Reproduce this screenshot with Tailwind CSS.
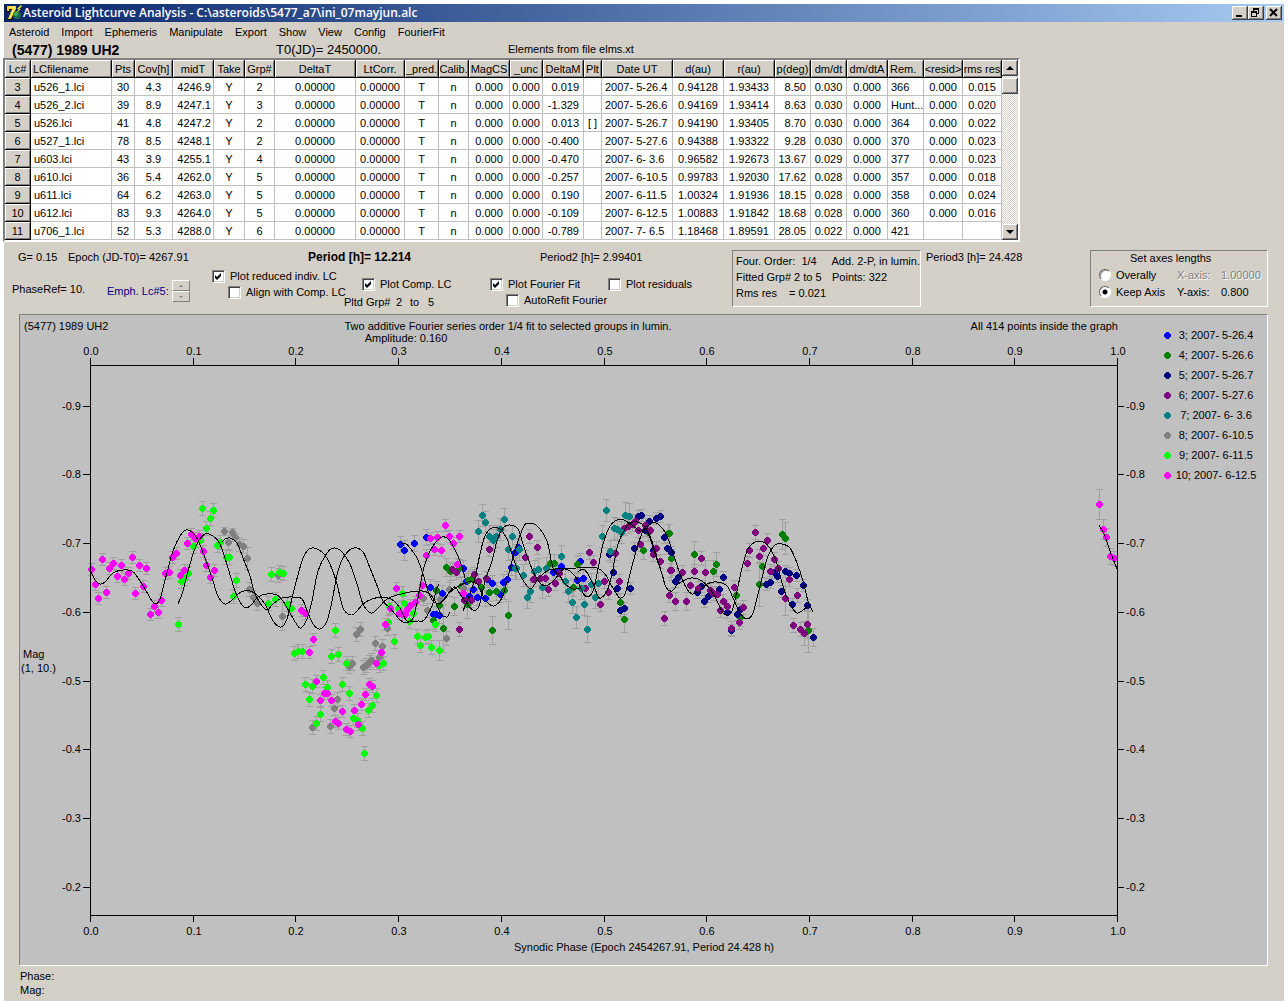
<!DOCTYPE html>
<html lang="en">
<head>
  <meta charset="UTF-8" />
  <meta name="viewport" content="width=device-width, initial-scale=1.0"/>
  <title>Asteroid Lightcurve Analysis</title>
  <script src="https://cdn.jsdelivr.net/npm/@tailwindcss/browser@4"></script>
</head>
<body class="bg-white pt-1 px-1 text-black text-[11px] leading-[14px] font-['Liberation_Sans',Arial,sans-serif] cursor-default">
  <div class="bg-[#d4d0c8]">

    <header class="flex items-center h-[18px] pl-0.5 pr-0.5 bg-linear-to-r from-[#0a246a] to-[#a6caf0]">
      <svg class="w-4 h-4 shrink-0" viewBox="0 0 16 16">
        <path d="M0 2h10v3L6 15H2L6 5H3v2H0z" fill="#000"/>
        <path d="M1 1h9v3L5 14H2L6 4H3v2H1z" fill="#f0d020"/>
        <path d="M3 2h6L4 13" fill="none" stroke="#fff79a" stroke-width="1"/>
        <circle cx="11" cy="10" r="4" fill="#206a50"/>
        <circle cx="10" cy="9" r="2" fill="#40b060"/>
        <path d="M15 0l-4 4h2l-3 4 5-4h-2l3-3z" fill="#ffff00"/>
      </svg>
      <h1 class="ml-px flex-1 text-white font-semibold text-[12px] leading-4 whitespace-nowrap font-['Open_Sans','Noto_Sans',sans-serif]">Asteroid Lightcurve Analysis - C:\asteroids\5477_a7\ini_07mayjun.alc</h1>
      <div class="flex">
        <button aria-label="Minimize" class="w-4 h-[14px] bg-[#d4d0c8] shadow-[inset_-1px_-1px_0_#404040,inset_1px_1px_0_#fff,inset_-2px_-2px_0_#808080]"><svg class="w-4 h-[14px]" viewBox="0 0 16 14"><path d="M4 9h6v2H4z"/></svg></button>
        <button aria-label="Restore" class="w-4 h-[14px] bg-[#d4d0c8] shadow-[inset_-1px_-1px_0_#404040,inset_1px_1px_0_#fff,inset_-2px_-2px_0_#808080]"><svg class="w-4 h-[14px]" viewBox="0 0 16 14"><path fill-rule="evenodd" d="M5 2h6v6H9v3H3V5h2zM6 4v1h3v2h1V4zM4 7v3h4V7z"/></svg></button>
        <button aria-label="Close" class="ml-0.5 w-4 h-[14px] bg-[#d4d0c8] shadow-[inset_-1px_-1px_0_#404040,inset_1px_1px_0_#fff,inset_-2px_-2px_0_#808080]"><svg class="w-4 h-[14px]" viewBox="0 0 16 14"><path d="M4 3l7 7M11 3l-7 7" stroke="#000" stroke-width="2"/></svg></button>
      </div>
    </header>

    <nav class="flex items-center gap-3 h-5 pl-[5px]">
      <button>Asteroid</button>
      <button>Import</button>
      <button>Ephemeris</button>
      <button>Manipulate</button>
      <button>Export</button>
      <button>Show</button>
      <button>View</button>
      <button>Config</button>
      <button>FourierFit</button>
    </nav>

    <div class="flex h-4 pl-2 whitespace-nowrap">
      <h2 class="w-[264px] font-bold text-[14px] leading-4">(5477) 1989 UH2</h2>
      <p class="w-[232px] text-[13px] leading-4">T0(JD)= 2450000.</p>
      <p>Elements from file elms.xt</p>
    </div>

    <!-- observation list -->
    <div class="flex w-fit border-2 border-t-[#808080] border-l-[#808080] border-r-white border-b-white -ml-px bg-white">
      <table class="table-fixed w-[997px] border-separate border-spacing-0 whitespace-nowrap">
        <colgroup>
          <col class="w-[26px]"><col class="w-[81px]"><col class="w-[23px]"><col class="w-[38px]"><col class="w-[41px]"><col class="w-[31px]"><col class="w-[30px]"><col class="w-[81px]"><col class="w-[49px]"><col class="w-[34px]"><col class="w-[30px]"><col class="w-[41px]"><col class="w-[33px]"><col class="w-[41px]"><col class="w-[18px]"><col class="w-[71px]"><col class="w-[51px]"><col class="w-[51px]"><col class="w-[36px]"><col class="w-[36px]"><col class="w-[41px]"><col class="w-[36px]"><col class="w-[39px]"><col class="w-[39px]">
        </colgroup>
        <thead><tr id="head"></tr></thead>
        <tbody id="rows"></tbody>
      </table>
      <div class="flex flex-col w-4 bg-[repeating-conic-gradient(#fff_0_25%,#d4d0c8_0_50%)] bg-[length:2px_2px]">
        <button aria-label="Scroll up" class="h-4 bg-[#d4d0c8] shadow-[inset_-1px_-1px_0_#404040,inset_1px_1px_0_#fff,inset_-2px_-2px_0_#808080]"><svg class="w-4 h-4" viewBox="0 0 16 16"><path d="M4 10l4-4 4 4z"/></svg></button>
        <div class="mt-0.5 h-4 bg-[#d4d0c8] shadow-[inset_-1px_-1px_0_#404040,inset_1px_1px_0_#fff,inset_-2px_-2px_0_#808080]"></div>
        <button aria-label="Scroll down" class="mt-auto h-4 bg-[#d4d0c8] shadow-[inset_-1px_-1px_0_#404040,inset_1px_1px_0_#fff,inset_-2px_-2px_0_#808080]"><svg class="w-4 h-4" viewBox="0 0 16 16"><path d="M4 6h8l-4 4z"/></svg></button>
      </div>
    </div>

    <!-- fit parameters and plot options -->
    <section class="flex pt-2 pl-2 pr-4 whitespace-nowrap">
      <div class="w-[200px]">
        <div class="flex pl-1.5"><p class="w-[50px]">G= 0.15</p><p>Epoch (JD-T0)= 4267.91</p></div>
        <div class="flex items-center mt-3">
          <p class="w-[95px]">PhaseRef= 10.</p>
          <p class="w-[65px] mt-1 text-[#000080]">Emph. Lc#5:</p>
          <div class="mt-1 flex flex-col">
            <button aria-label="Up" class="w-[18px] h-[11px] border border-t-white border-l-white border-r-[#808080] border-b-[#808080]"><svg class="block w-4 h-2" viewBox="0 0 16 8"><path d="M6 5l2-2 2 2z" fill="#808080"/></svg></button>
            <button aria-label="Down" class="w-[18px] h-[11px] border border-t-white border-l-white border-r-[#808080] border-b-[#808080]"><svg class="block w-4 h-2" viewBox="0 0 16 8"><path d="M6 3h4l-2 2z" fill="#808080"/></svg></button>
          </div>
        </div>
      </div>

      <div class="w-[520px]">
        <div class="flex pl-24"><p class="w-[232px] text-[12px] leading-[14px] font-bold">Period [h]= 12.214</p><p>Period2 [h]= 2.99401</p></div>
        <div class="flex">
          <div class="w-[132px] pt-[5px] flex flex-col gap-0.5">
            <label class="flex items-center gap-[5px]"><span class="relative w-[13px] h-[13px]"><input type="checkbox" checked class="peer block appearance-none w-[13px] h-[13px] bg-white border border-t-[#808080] border-l-[#808080] border-r-white border-b-white shadow-[inset_1px_1px_0_#404040,inset_-1px_-1px_0_#d4d0c8]"><svg class="hidden peer-checked:block absolute inset-0 w-[13px] h-[13px] pointer-events-none" viewBox="0 0 13 13"><path d="M3 5l2 2 4-4v3L5 10 3 8z"/></svg></span>Plot reduced indiv. LC</label>
            <label class="flex items-center gap-[5px] ml-4"><span class="relative w-[13px] h-[13px]"><input type="checkbox" class="peer block appearance-none w-[13px] h-[13px] bg-white border border-t-[#808080] border-l-[#808080] border-r-white border-b-white shadow-[inset_1px_1px_0_#404040,inset_-1px_-1px_0_#d4d0c8]"><svg class="hidden peer-checked:block absolute inset-0 w-[13px] h-[13px] pointer-events-none" viewBox="0 0 13 13"><path d="M3 5l2 2 4-4v3L5 10 3 8z"/></svg></span>Align with Comp. LC</label>
          </div>
          <div class="w-[146px] pt-[13px]">
            <label class="flex items-center gap-[5px] ml-[18px]"><span class="relative w-[13px] h-[13px]"><input type="checkbox" checked class="peer block appearance-none w-[13px] h-[13px] bg-white border border-t-[#808080] border-l-[#808080] border-r-white border-b-white shadow-[inset_1px_1px_0_#404040,inset_-1px_-1px_0_#d4d0c8]"><svg class="hidden peer-checked:block absolute inset-0 w-[13px] h-[13px] pointer-events-none" viewBox="0 0 13 13"><path d="M3 5l2 2 4-4v3L5 10 3 8z"/></svg></span>Plot Comp. LC</label>
            <p class="mt-1 flex"><span class="w-[52px]">Pltd Grp#</span><span class="w-3.5">2</span><span class="w-[18px]">to</span><span>5</span></p>
          </div>
          <div class="w-[118px] pt-[13px] flex flex-col gap-0.5">
            <label class="flex items-center gap-[5px]"><span class="relative w-[13px] h-[13px]"><input type="checkbox" checked class="peer block appearance-none w-[13px] h-[13px] bg-white border border-t-[#808080] border-l-[#808080] border-r-white border-b-white shadow-[inset_1px_1px_0_#404040,inset_-1px_-1px_0_#d4d0c8]"><svg class="hidden peer-checked:block absolute inset-0 w-[13px] h-[13px] pointer-events-none" viewBox="0 0 13 13"><path d="M3 5l2 2 4-4v3L5 10 3 8z"/></svg></span>Plot Fourier Fit</label>
            <label class="flex items-center gap-[5px] ml-4"><span class="relative w-[13px] h-[13px]"><input type="checkbox" class="peer block appearance-none w-[13px] h-[13px] bg-white border border-t-[#808080] border-l-[#808080] border-r-white border-b-white shadow-[inset_1px_1px_0_#404040,inset_-1px_-1px_0_#d4d0c8]"><svg class="hidden peer-checked:block absolute inset-0 w-[13px] h-[13px] pointer-events-none" viewBox="0 0 13 13"><path d="M3 5l2 2 4-4v3L5 10 3 8z"/></svg></span>AutoRefit Fourier</label>
          </div>
          <div class="pt-[13px]">
            <label class="flex items-center gap-[5px]"><span class="relative w-[13px] h-[13px]"><input type="checkbox" class="peer block appearance-none w-[13px] h-[13px] bg-white border border-t-[#808080] border-l-[#808080] border-r-white border-b-white shadow-[inset_1px_1px_0_#404040,inset_-1px_-1px_0_#d4d0c8]"><svg class="hidden peer-checked:block absolute inset-0 w-[13px] h-[13px] pointer-events-none" viewBox="0 0 13 13"><path d="M3 5l2 2 4-4v3L5 10 3 8z"/></svg></span>Plot residuals</label>
          </div>
        </div>
      </div>

      <div class="w-[189px] h-[57px] pl-[3px] pt-0.5 border border-t-[#808080] border-l-[#808080] border-r-white border-b-white leading-4">
        <div class="flex"><p class="w-[96px]">Four. Order:&nbsp; 1/4</p><p>Add. 2-P, in lumin.</p></div>
        <div class="flex"><p class="w-[96px]">Fitted Grp# 2 to 5</p><p>Points: 322</p></div>
        <div class="flex"><p class="w-[53px]">Rms res</p><p>= 0.021</p></div>
      </div>
      <p class="ml-[5px]">Period3 [h]= 24.428</p>

      <fieldset class="ml-auto w-[178px] h-[57px] pl-2 border border-t-[#808080] border-l-[#808080] border-r-white border-b-white">
        <p class="pl-[31px]">Set axes lengths</p>
        <div class="flex items-center h-[17px] mt-px">
          <label class="flex items-center gap-[5px] w-[78px]"><input type="radio" name="axes" class="appearance-none w-3 h-3 rounded-full bg-white border border-t-[#606060] border-l-[#606060] border-r-white border-b-white shadow-[inset_1px_1px_0_#a0a0a0]">Overally</label>
          <span class="w-11 text-[#808080] [text-shadow:1px_1px_0_#fff]">X-axis:</span><span class="text-[#808080] [text-shadow:1px_1px_0_#fff]">1.00000</span>
        </div>
        <div class="flex items-center h-[17px]">
          <label class="flex items-center gap-[5px] w-[78px]"><input type="radio" name="axes" checked class="appearance-none w-3 h-3 rounded-full bg-white border border-t-[#606060] border-l-[#606060] border-r-white border-b-white checked:bg-[radial-gradient(circle,#000_2px,#fff_3px)]">Keep Axis</label>
          <span class="w-11">Y-axis:</span><span>0.800</span>
        </div>
      </fieldset>
    </section>

    <main class="mt-[5px] ml-[15px] mr-4 bg-[#c0c0c0] border border-t-[#808080] border-l-[#808080] border-r-white border-b-white">
      <svg id="plot" class="block w-full h-auto text-[11px]" viewBox="20 314 1247 650" fill="#000">
        <text x="24" y="329">(5477) 1989 UH2</text>
        <text x="508" y="329" text-anchor="middle">Two additive Fourier series order 1/4 fit to selected groups in lumin.</text>
        <text x="406" y="341" text-anchor="middle">Amplitude: 0.160</text>
        <text x="1118" y="329" text-anchor="end">All 414 points inside the graph</text>
        <text x="23" y="657">Mag</text>
        <text x="21" y="671">(1, 10.)</text>
        <text x="644" y="950" text-anchor="middle">Synodic Phase (Epoch 2454267.91, Period 24.428 h)</text>
      </svg>
    </main>

    <footer class="pl-4 pt-[3px] pb-1">
      <p>Phase:</p>
      <p>Mag:</p>
    </footer>
    <div class="border-t border-white h-[3px]"></div>
  </div>

  <script>
    const heads = ['Lc#', 'LCfilename', 'Pts', 'Cov[h]', 'midT', 'Take', 'Grp#', 'DeltaT', 'LtCorr.', '_pred.', 'Calib.', 'MagCS', '_unc', 'DeltaM', 'Plt', 'Date UT', 'd(au)', 'r(au)', 'p(deg)', 'dm/dt', 'dm/dtA', 'Rem.', '<resid>', 'rms res'];
    // lc | file | pts | cov | midT | grp | deltaM | plt | date | d | r | p | dm/dt | rem | resid | rms
    const list = `3|u526_1.lci|30|4.3|4246.9|2|0.019||2007- 5-26.4|0.94128|1.93433|8.50|0.030|366|0.000|0.015
4|u526_2.lci|39|8.9|4247.1|3|-1.329||2007- 5-26.6|0.94169|1.93414|8.63|0.030|Hunt...|0.000|0.020
5|u526.lci|41|4.8|4247.2|2|0.013|[ ]|2007- 5-26.7|0.94190|1.93405|8.70|0.030|364|0.000|0.022
6|u527_1.lci|78|8.5|4248.1|2|-0.400||2007- 5-27.6|0.94388|1.93322|9.28|0.030|370|0.000|0.023
7|u603.lci|43|3.9|4255.1|4|-0.470||2007- 6- 3.6|0.96582|1.92673|13.67|0.029|377|0.000|0.023
8|u610.lci|36|5.4|4262.0|5|-0.257||2007- 6-10.5|0.99783|1.92030|17.62|0.028|357|0.000|0.018
9|u611.lci|64|6.2|4263.0|5|0.190||2007- 6-11.5|1.00324|1.91936|18.15|0.028|358|0.000|0.024
10|u612.lci|83|9.3|4264.0|5|-0.109||2007- 6-12.5|1.00883|1.91842|18.68|0.028|360|0.000|0.016
11|u706_1.lci|52|5.3|4288.0|6|-0.789||2007- 7- 6.5|1.18468|1.89591|28.05|0.022|421||`;

    document.getElementById('head').innerHTML = heads.map((h, i) => {
      const align = (i === 1 || i === 21) ? 'text-left pl-0.5' : 'text-center';
      return `<th class="h-[18px] p-0 font-normal bg-[#d4d0c8] border-r border-b border-black shadow-[inset_1px_1px_0_#fff,inset_-1px_-1px_0_#808080] ${align}">${h.replace('<', '&lt;')}</th>`;
    }).join('');

    const alignOf = i => {
      if (i === 1 || i === 15 || i === 21) return 'text-left pl-[3px]';
      if (i === 4) return 'text-right pr-0.5';
      if (i === 13 || i === 18) return 'text-right pr-1';
      return 'text-center';
    };
    document.getElementById('rows').innerHTML = list.split('\n').map(line => {
      const [lc, file, pts, cov, mid, grp, dm, plt, date, d, r, p, slope, rem, resid, rms] = line.split('|');
      const cells = [file, pts, cov, mid, 'Y', grp, '0.00000', '0.00000', 'T', 'n', '0.000', '0.000', dm, plt, date, d, r, p, slope, '0.000', rem, resid, rms];
      return `<tr><th scope="row" class="h-[18px] p-0 font-normal bg-[#d4d0c8] border-r border-b border-black shadow-[inset_1px_1px_0_#fff,inset_-1px_-1px_0_#808080]">${lc}</th>` +
        cells.map((c, i) => `<td class="h-[18px] p-0 border-r border-b border-[#c0c0c0] ${alignOf(i + 1)}">${c}</td>`).join('') + '</tr>';
    }).join('');

    // x, y, optional half length of the error bar
    const series = [
      { label: '3; 2007- 5-26.4', color: '#0000ff', err: 8, pts: '400,543 404,549,10 414,542 426,536 430,586 442,592 433,613 436,613 439,614 463,567 466,580 469,595 477,596 473,588 485,597 492,582 487,578 500,593 503,581 507,578 511,566 515,551 518,546 553,571 557,570 561,565 580,560 577,579 583,577' },
      { label: '4; 2007- 5-26.6', color: '#008000', err: 9, pts: '446,566 450,570 459,567 436,589 439,604 433,619 443,627,24 454,605 468,579 472,577 461,585 481,586 467,603,14 489,591 496,590 504,589 508,614,14 492,629,14 550,562 554,562 577,563 573,586 620,601 624,618,13 643,549 648,531 669,532 668,532 671,557 694,553,13 716,563,12 713,570,11 736,594 740,616 759,583,22 762,565,11 782,533,15 785,537,16 808,629,22' },
      { label: '5; 2007- 5-26.7', color: '#000080', err: 6, pts: '609,553 613,571 617,587 620,609 624,607 630,587 634,547 638,515 641,514 645,529 649,520 653,549 656,517 660,515 664,536 667,547 671,551 675,580 678,576 697,591 701,585 704,600 708,595 719,588 723,576 727,611 731,629 737,613 740,608 766,583 770,581 774,571 777,575 781,590 785,570 789,572 792,603 796,574 803,584 807,604 813,636,9' },
      { label: '6; 2007- 5-27.6', color: '#800080', err: 7, pts: '452,568 456,571 474,573 478,580 486,577 464,599 471,599 459,628 489,548 525,556 529,535 537,546 533,578 540,577 545,577 548,588 555,582 559,572 585,587 589,551 593,561 600,603 604,580 608,591 615,552 619,580 624,527 628,525 632,523 635,520 638,529 640,543 645,524 650,529 653,553 656,547 660,560 664,617 669,594 670,569 671,569,10 675,600,9 682,571 686,600,9 690,584 694,570 701,557 705,571,12 698,587 710,589 713,592 717,593 720,609 723,600 727,605 734,586 739,621 743,606 731,627 747,562 749,549 755,531 759,555 763,547 767,539 770,570 774,558 778,567 785,597,17 789,578 797,594 793,624 800,628 804,632,12 807,623,14' },
      { label: '7; 2007- 6- 3.6', color: '#008080', err: 11, pts: '482,514 485,521 478,530 489,535 493,539 496,535 500,528 504,518 512,535 508,548 515,567 516,567 519,548 523,574 527,596 530,590 534,570 538,568 542,586 546,567 561,555 565,580 568,590 572,601 576,616 587,628,13 584,603 581,587 591,583 595,596 598,582 602,535 606,509 610,550 614,527 617,528 621,531 625,514,13 629,515,13' },
      { label: '8; 2007- 6-10.5', color: '#808080', err: 7, pts: '224,530,4 228,541 232,531,4 235,536,4 239,543 243,545 247,557,11 249,588 253,596 257,602 278,574 282,615,14 312,726 330,725 334,707 337,698 349,665 352,662 356,633 360,628 363,666 366,664 369,661 371,659 375,642 379,656 382,645 387,627 423,597 427,609 440,598 449,588 446,637 463,587' },
      { label: '9; 2007- 6-11.5', color: '#00ff00', err: 7, pts: '181,580 184,577 188,572 178,623 193,545 200,539 202,507 206,527 210,517 213,509 217,544 220,541 226,556 229,556 233,595 236,579 268,602 275,598 271,573 279,571 283,572 287,603 291,607 294,652 298,650 302,650 335,629 331,655 338,653 346,662 305,683 312,685 323,676 327,686 342,683 309,698 349,692 320,713 316,722 353,717 357,719 362,727 364,752 368,709 372,704 376,694 379,664 383,662 388,621 394,640 389,605 398,607 402,592 404,602 413,612 409,620 417,635 420,644 425,636 428,635 431,646 439,649,10 435,623' },
      { label: '10; 2007- 6-12.5', color: '#ff00ff', err: 6, pts: '91,568 95,583 98,597 102,558 106,591 109,567 113,562 117,575 121,564 124,578 128,572 132,556 135,592 139,564 143,585 146,567 150,613 154,605 158,611 161,599 165,572 169,571 172,556 176,552 180,574 184,569 187,542 191,533 195,537 199,535 203,550 206,564 210,576 214,569 301,609 305,612 313,638 309,651 316,680 324,692 327,692 320,699 331,699 335,720 338,722 342,710 346,728 350,730 354,709 358,723 361,703 365,693 369,683 372,685 376,662 381,651 385,623 390,607 396,587 399,612 402,613 405,613 407,608 410,604 415,601 419,594 422,584 426,554 430,537 434,548 437,536 441,549 445,524 449,535 453,542 459,535 457,563 463,592 1099,503,15 1103,528,10 1106,536,9 1110,555,8 1114,557,7' }
    ];

    // Fourier fit, one curve per night
    const fits = [
      '91,571 95,579 100,583 105,581 113,572 123,569 132,570 138,577 145,588 152,600 156,603 160,598 163,587 168,568 173,550 180,535 186,529 192,531 198,539 205,557 212,577 218,595 225,603 232,599 238,593 244,590 250,590 257,594 265,603 273,620 281,626 287,618 293,593 302,560 308,549 314,547 323,552 330,563 337,583 343,607 351,614 357,610 363,603 372,598 382,596 391,598 400,607 407,620 418,620 424,619 432,605 436,590 439,583',
      '178,603 183,590 190,563 197,543 205,533 213,535 220,543 228,567 235,590 240,601 246,607 252,603 258,596 267,593 277,594 283,600 290,612 300,627 307,618 312,600 318,570 327,552 334,547 342,551 350,563 357,583 363,603 371,612 378,607 387,598 397,594 410,591 422,590 430,593 436,602 441,613 447,616 450,611',
      '222,541 225,538 230,537 237,542 243,557 250,575 254,590 260,602 267,609 273,603 282,597 293,596 302,598 308,612 313,623 320,628 327,620 332,600 338,570 345,554 354,547 363,551 370,567 378,587 383,600 390,607 395,613 400,619 406,622 413,617 418,597 423,570 430,550 440,537 447,537 453,545 460,560 465,577',
      '401,543 406,543 410,547 417,557 423,573 428,590 433,600 440,602 448,593 457,586 468,581 477,583 483,595 488,602 494,605 502,597 507,580 512,560 518,540 524,525 529,522 537,525 547,540 553,567 560,575 565,583 573,588 580,587',
      '463,610 470,593 475,577 480,553 485,535 492,527 500,528 507,538 510,547 518,570 527,585 532,587 538,578 547,570 555,568 577,567 597,567 605,573 610,582 616,592 620,597 625,593 630,573 637,547 643,530 650,523 656,522 663,528 667,535 673,552 680,573 687,588 692,593 698,591 707,583 717,581 727,585 733,597 740,612 747,618 753,612 758,593 763,573 768,555 775,544 782,543 790,547 797,562 803,580 808,600 813,611',
      '439,604 445,598 450,590 455,586 460,593 465,600 473,609 479,605 485,580 492,560 497,540 503,527 510,524 518,528 523,543 530,563 537,578 545,585 553,580 560,572 565,568 575,575 582,590 587,596 593,590 598,568 603,543 610,525 617,519 624,519 632,524 640,530 645,529 650,537 656,556 661,570 666,586 672,590 678,583 687,578 693,577 702,580 710,588 717,600 723,612 728,614 732,610 737,590 742,567 748,548 755,541 763,541 770,547 777,563 783,585 790,603 797,612 803,609 808,605',
      '578,571 583,568 588,573 593,583 598,595 601,597 607,590 612,573 618,543 627,525 633,521 642,523 650,535 658,560 665,583',
      '1099,524 1105,535 1110,550 1117,568'
    ];

    // Catmull-Rom spline through the points
    function smooth(str) {
      const p = str.split(' ').map(s => s.split(',').map(Number));
      let d = `M${p[0]}`;
      for (let i = 0; i < p.length - 1; i++) {
        const a = p[i - 1] || p[i], b = p[i], c = p[i + 1], e = p[i + 2] || c;
        d += `C${b[0] + (c[0] - a[0]) / 6},${b[1] + (c[1] - a[1]) / 6} ${c[0] - (e[0] - b[0]) / 6},${c[1] - (e[1] - b[1]) / 6} ${c}`;
      }
      return d;
    }

    const dot = 'M-1 -3h3v1h1v1h1v3h-1v1h-1v1h-3v-1h-1v-1h-1v-3h1v-1h1z';
    let out = '';

    series.forEach(s => {
      s.pts.split(' ').forEach(t => {
        const [x, y, e = s.err] = t.split(',').map(Number);
        out += `<path d="M${x} ${y - e}V${y + e}M${x - 3} ${y - e}h7M${x - 3} ${y + e}h7" stroke="#a0a0a0" shape-rendering="crispEdges"/>`;
      });
    });
    series.forEach((s, i) => {
      s.pts.split(' ').forEach(t => {
        const [x, y] = t.split(',');
        out += `<path d="${dot}" transform="translate(${x} ${y})" fill="${s.color}"/>`;
      });
      out += `<path d="${dot}" transform="translate(1167 ${334 + i * 20})" fill="${s.color}"/>`;
      out += `<text x="1216" y="${338 + i * 20}" text-anchor="middle">${s.label}</text>`;
    });
    fits.forEach(f => {
      out += `<path d="${smooth(f)}" fill="none" stroke="#000" shape-rendering="crispEdges"/>`;
    });

    let axes = 'M90 364H1117M90 914H1117';
    for (let i = 0; i <= 10; i++) {
      const x = Math.round(90 + i * 102.7);
      axes += `M${x} 357v7M${x} 914v7`;
      out += `<text x="${x + 1}" y="354" text-anchor="middle">${(i / 10).toFixed(1)}</text>`;
      out += `<text x="${x + 1}" y="934" text-anchor="middle">${(i / 10).toFixed(1)}</text>`;
    }
    for (let i = 2; i <= 9; i++) {
      const y = Math.round(1023 - i * 68.7);
      axes += `M83 ${y}h7M1117 ${y}h7`;
      out += `<text x="81" y="${y + 4}" text-anchor="end">-0.${i}</text>`;
      out += `<text x="1126" y="${y + 4}">-0.${i}</text>`;
    }
    axes += 'M90 364V914M1117 364V914';
    out += `<path d="${axes}" fill="none" stroke="#000" shape-rendering="crispEdges"/>`;
    document.getElementById('plot').insertAdjacentHTML('beforeend', out);
  </script>
</body>
</html>
